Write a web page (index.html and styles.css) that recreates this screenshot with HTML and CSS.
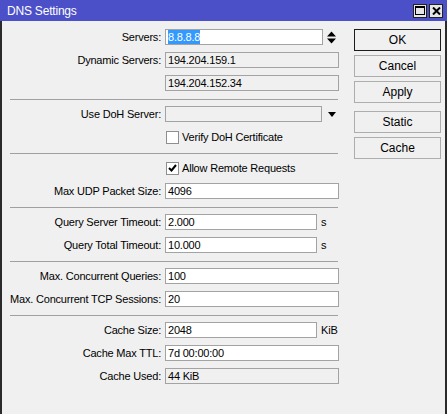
FILE: index.html
```html
<!DOCTYPE html>
<html lang="en">
  <head>
    <meta charset="UTF-8" />
    <title>DNS Settings</title>
    <link rel="stylesheet" href="styles.css">
  </head>
  <body>
    <div class="window">
      <div class="titlebar">
        <span class="title">DNS Settings</span>
        <span class="tb-btn">
          <svg width="10" height="9" viewBox="0 0 10 9"><rect x="0.5" y="0.5" width="9" height="8" fill="none" stroke="#000"/><rect x="0" y="0" width="10" height="2" fill="#000"/></svg>
        </span>
        <span class="tb-btn">
          <svg width="9" height="8" viewBox="0 0 9 8"><path d="M1 0.5 L8 7.5 M8 0.5 L1 7.5" stroke="#000" stroke-width="2"/></svg>
        </span>
      </div>

      <div class="main">
        <!-- settings form -->
        <div class="form">
          <div class="row">
            <span class="label">Servers:</span>
            <span class="field w-spin"><span class="sel">8.8.8.8</span></span>
            <svg class="spin" width="9" height="13" viewBox="0 0 9 13"><path d="M0 5.5 L4.5 0.5 L9 5.5 Z M0 7.5 L4.5 12.5 L9 7.5 Z" fill="#000"/></svg>
          </div>
          <div class="row">
            <span class="label">Dynamic Servers:</span>
            <span class="field ro w-full">194.204.159.1</span>
          </div>
          <div class="row">
            <span class="label"></span>
            <span class="field ro w-full">194.204.152.34</span>
          </div>
          <div class="sep"></div>

          <div class="row">
            <span class="label">Use DoH Server:</span>
            <span class="field ro w-doh"></span>
            <svg class="drop" width="8" height="5" viewBox="0 0 8 5"><path d="M0 0 L8 0 L4 5 Z" fill="#000"/></svg>
          </div>
          <div class="row">
            <span class="label"></span>
            <span class="check"></span>
            <span class="check-text">Verify DoH Certificate</span>
          </div>
          <div class="sep"></div>

          <div class="row">
            <span class="label"></span>
            <span class="check">
              <svg width="9" height="8" viewBox="0 0 9 8"><path d="M1 4 L3.5 6.5 L8 1" fill="none" stroke="#000" stroke-width="2"/></svg>
            </span>
            <span class="check-text">Allow Remote Requests</span>
          </div>
          <div class="row">
            <span class="label">Max UDP Packet Size:</span>
            <span class="field w-full">4096</span>
          </div>
          <div class="sep"></div>

          <div class="row">
            <span class="label">Query Server Timeout:</span>
            <span class="field w-short">2.000</span>
            <span class="unit">s</span>
          </div>
          <div class="row">
            <span class="label">Query Total Timeout:</span>
            <span class="field w-short">10.000</span>
            <span class="unit">s</span>
          </div>
          <div class="sep"></div>

          <div class="row">
            <span class="label">Max. Concurrent Queries:</span>
            <span class="field w-full">100</span>
          </div>
          <div class="row">
            <span class="label">Max. Concurrent TCP Sessions:</span>
            <span class="field w-full">20</span>
          </div>
          <div class="sep"></div>

          <div class="row">
            <span class="label">Cache Size:</span>
            <span class="field w-short">2048</span>
            <span class="unit">KiB</span>
          </div>
          <div class="row">
            <span class="label">Cache Max TTL:</span>
            <span class="field w-full">7d 00:00:00</span>
          </div>
          <div class="row">
            <span class="label">Cache Used:</span>
            <span class="field ro w-full">44 KiB</span>
          </div>
        </div>

        <!-- dialog buttons -->
        <div class="buttons">
          <span class="btn default">OK</span>
          <span class="btn">Cancel</span>
          <span class="btn">Apply</span>
          <span class="btn spaced">Static</span>
          <span class="btn">Cache</span>
        </div>
      </div>
    </div>
  </body>
</html>
```

FILE: styles.css
```css
* {
  box-sizing: border-box;
}
body {
  margin: 0;
  background: #fff;
  font-family: "Liberation Sans", Arial, sans-serif;
  font-size: 11px;
  letter-spacing: -0.2px;
  color: #000;
}
.window {
  width: 447px;
  height: 414px;
  background: #f0f0f0;
  display: flex;
  flex-direction: column;
  overflow: hidden;
}
.titlebar {
  height: 21px;
  background: #4b50c8;
  display: flex;
  align-items: center;
  gap: 2px;
  padding: 0 4px 0 7px;
}
.title {
  flex: 1;
  color: #fff;
  font-size: 12px;
  letter-spacing: -0.2px;
}
.tb-btn {
  width: 14px;
  height: 14px;
  border: 1px solid #222;
  background: #e6e6e6;
  display: flex;
  align-items: center;
  justify-content: center;
}
.main {
  flex: 1;
  display: flex;
  border-left: 2px solid #2b2b2b;
  border-right: 2px solid #2b2b2b;
}
.form {
  width: 344px;
  padding-top: 1px;
}
.row {
  height: 16px;
  margin-top: 7px;
  display: flex;
  align-items: center;
}
.label {
  width: 159px;
  margin-right: 4px;
  text-align: right;
  white-space: nowrap;
}
.field {
  height: 16px;
  border: 1px solid #a3a3a3;
  background: #fff;
  padding-left: 2px;
  line-height: 14px;
  white-space: nowrap;
}
.field.ro {
  background: #f0f0f0;
}
.w-full {
  width: 174px;
}
.w-short {
  width: 152px;
}
.w-spin {
  width: 158px;
}
.w-doh {
  width: 157px;
}
.sel {
  background: #3399ff;
  color: #fff;
  display: inline-block;
  line-height: 14px;
}
.spin {
  margin-left: 4px;
}
.drop {
  margin-left: 6px;
}
.unit {
  margin-left: 4px;
}
.check {
  width: 13px;
  height: 13px;
  margin-left: 1px;
  border: 1px solid #8f8f8f;
  background: #fff;
  display: flex;
  align-items: center;
  justify-content: center;
}
.check-text {
  margin-left: 3px;
}
.sep {
  height: 1px;
  background: #a0a0a0;
  margin: 8px 0 -1px 8px;
  width: 328px;
}
.buttons {
  width: 87px;
  margin-left: 8px;
  padding-top: 8px;
  display: flex;
  flex-direction: column;
  gap: 4px;
}
.btn {
  height: 22px;
  border: 1px solid #adadad;
  background: #f0f0f0;
  display: flex;
  align-items: center;
  justify-content: center;
  font-size: 12px;
  letter-spacing: 0;
}
.btn.default {
  border-color: #1c1c1c;
}
.btn.spaced {
  margin-top: 4px;
}
```
